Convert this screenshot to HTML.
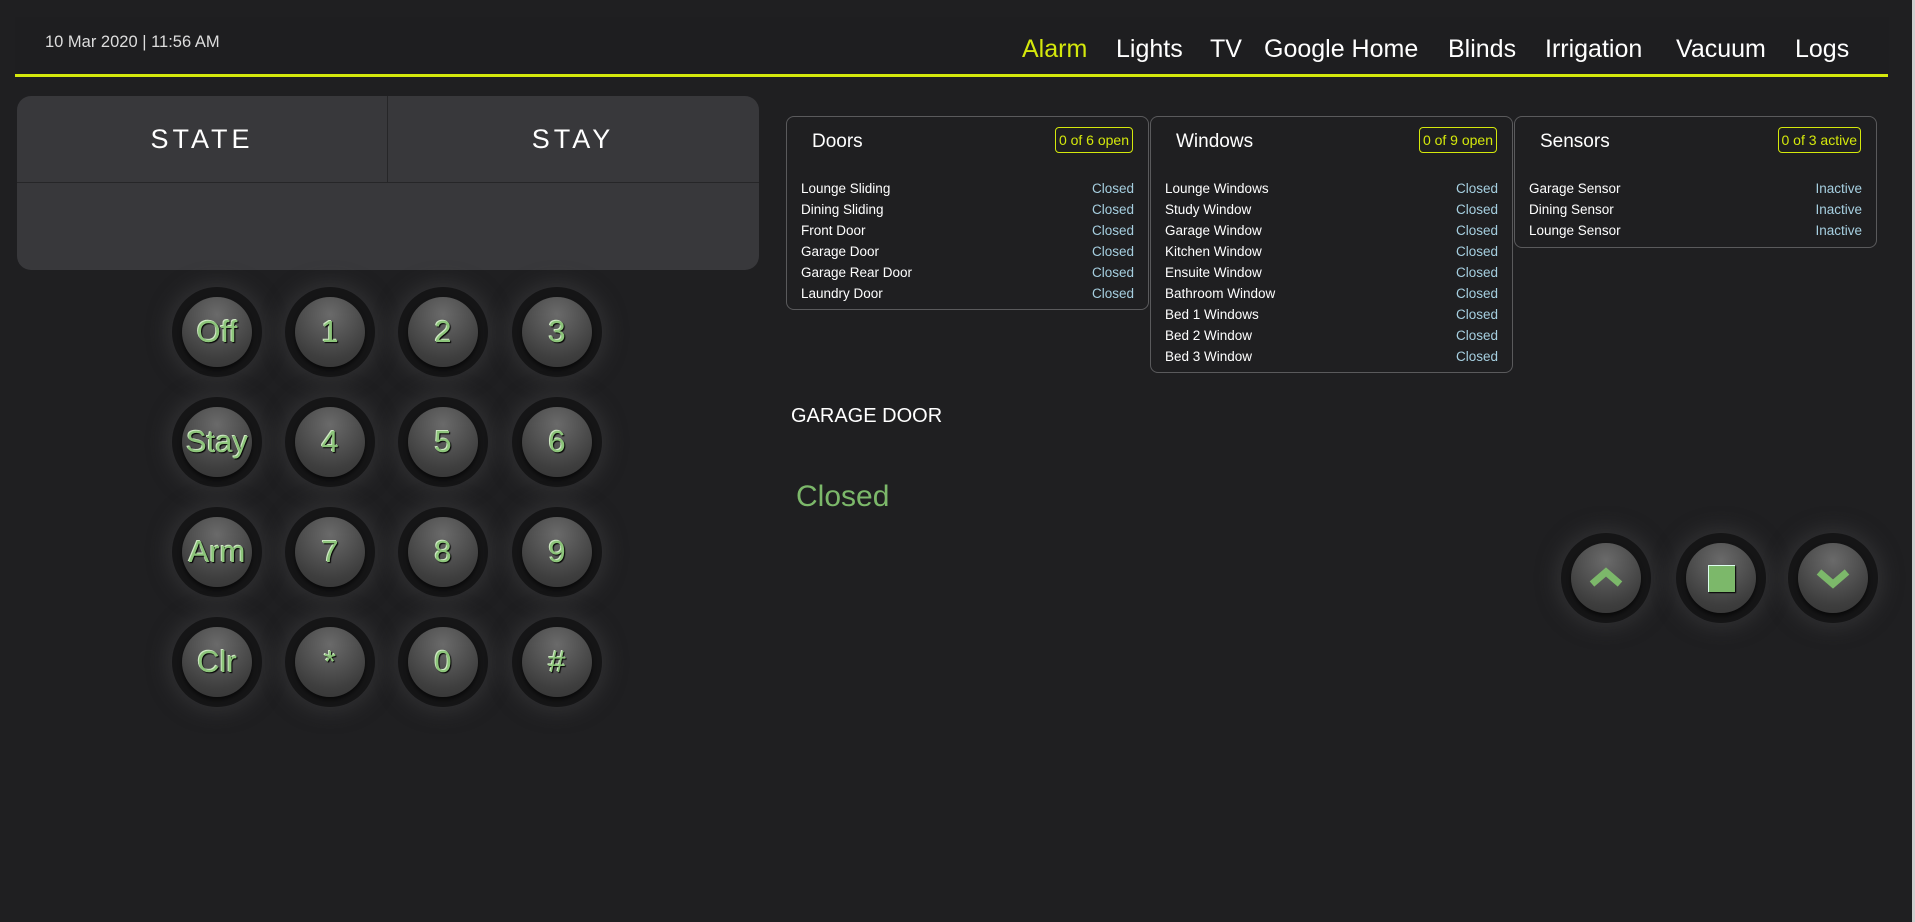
<!DOCTYPE html>
<html><head><meta charset="utf-8"><style>
*{margin:0;padding:0;box-sizing:border-box}
body{width:1915px;height:922px;background:#1f1f21;position:relative;overflow:hidden;font-family:"Liberation Sans",sans-serif;color:#fff}
.a{position:absolute;white-space:nowrap}
.nav{top:35px;font-size:25px;color:#fff}
.hdr{left:15px;top:17px;width:1874px;height:60px;background:#1e1e20}
.line{left:15px;top:74px;width:1873px;height:3px;background:#d4e80c}
.panel{left:17px;top:96px;width:742px;height:174px;background:#38383b;border-radius:14px}
.btn{width:90px;height:90px;border-radius:50%;background:#151516;box-shadow:0 0 18px 6px rgba(60,60,62,.55);}
.btn .in{position:absolute;left:10px;top:10px;width:70px;height:70px;border-radius:50%;background:radial-gradient(circle at 50% 25%,#6a6a6a,#3e3e3e 70%,#333 100%);box-shadow:0 3px 4px rgba(0,0,0,.6);display:flex;align-items:center;justify-content:center;color:#8cc47a;font-size:31px;text-shadow:1px 1px 1px #000,-1px -1px 0 #cfe8c4}
.card{border:1px solid #5a5a5c;border-radius:8px;background:#1f1f21}
.card .t{position:absolute;left:25px;top:14px;font-size:19px}
.card .b{position:absolute;top:10px;right:15px;border:1px solid #d4e80c;color:#d4e80c;border-radius:4px;font-size:14px;padding:4px 3px}
.row{position:absolute;left:14px;right:14px;font-size:13.5px;display:flex;justify-content:space-between}
.row span:last-child{color:#a6cfe0}
.sb{left:1912px;top:0;width:3px;height:922px;background:#cfcfcf}
</style></head><body>
<div class="a hdr"></div>
<div class="a" style="left:45px;top:33px;font-size:16.5px;color:#ddd">10 Mar 2020 | 11:56 AM</div>
<div class="a nav" style="left:1022px;color:#d4e80c">Alarm</div>
<div class="a nav" style="left:1116px">Lights</div>
<div class="a nav" style="left:1210px">TV</div>
<div class="a nav" style="left:1264px">Google Home</div>
<div class="a nav" style="left:1448px">Blinds</div>
<div class="a nav" style="left:1545px">Irrigation</div>
<div class="a nav" style="left:1676px">Vacuum</div>
<div class="a nav" style="left:1795px">Logs</div>
<div class="a line"></div>

<div class="a panel">
 <div class="a" style="left:0;top:86px;width:742px;height:1px;background:#262628"></div>
 <div class="a" style="left:370px;top:0;width:1px;height:86px;background:#262628"></div>
 <div class="a" style="left:0;top:28px;width:370px;text-align:center;font-size:27px;letter-spacing:4px">STATE</div>
 <div class="a" style="left:370px;top:28px;width:372px;text-align:center;font-size:27px;letter-spacing:4px">STAY</div>
</div>

<div class="a btn" style="left:172px;top:287px"><div class="in">Off</div></div>
<div class="a btn" style="left:285px;top:287px"><div class="in">1</div></div>
<div class="a btn" style="left:398px;top:287px"><div class="in">2</div></div>
<div class="a btn" style="left:512px;top:287px"><div class="in">3</div></div>
<div class="a btn" style="left:172px;top:397px"><div class="in">Stay</div></div>
<div class="a btn" style="left:285px;top:397px"><div class="in">4</div></div>
<div class="a btn" style="left:398px;top:397px"><div class="in">5</div></div>
<div class="a btn" style="left:512px;top:397px"><div class="in">6</div></div>
<div class="a btn" style="left:172px;top:507px"><div class="in">Arm</div></div>
<div class="a btn" style="left:285px;top:507px"><div class="in">7</div></div>
<div class="a btn" style="left:398px;top:507px"><div class="in">8</div></div>
<div class="a btn" style="left:512px;top:507px"><div class="in">9</div></div>
<div class="a btn" style="left:172px;top:617px"><div class="in">Clr</div></div>
<div class="a btn" style="left:285px;top:617px"><div class="in">*</div></div>
<div class="a btn" style="left:398px;top:617px"><div class="in">0</div></div>
<div class="a btn" style="left:512px;top:617px"><div class="in">#</div></div>

<div class="a card" style="left:786px;top:116px;width:363px;height:194px">
 <div class="t">Doors</div><div class="b">0 of 6 open</div>
 <div class="row" style="top:64px"><span>Lounge Sliding</span><span>Closed</span></div>
 <div class="row" style="top:85px"><span>Dining Sliding</span><span>Closed</span></div>
 <div class="row" style="top:106px"><span>Front Door</span><span>Closed</span></div>
 <div class="row" style="top:127px"><span>Garage Door</span><span>Closed</span></div>
 <div class="row" style="top:148px"><span>Garage Rear Door</span><span>Closed</span></div>
 <div class="row" style="top:169px"><span>Laundry Door</span><span>Closed</span></div>
</div>
<div class="a card" style="left:1150px;top:116px;width:363px;height:257px">
 <div class="t">Windows</div><div class="b">0 of 9 open</div>
 <div class="row" style="top:64px"><span>Lounge Windows</span><span>Closed</span></div>
 <div class="row" style="top:85px"><span>Study Window</span><span>Closed</span></div>
 <div class="row" style="top:106px"><span>Garage Window</span><span>Closed</span></div>
 <div class="row" style="top:127px"><span>Kitchen Window</span><span>Closed</span></div>
 <div class="row" style="top:148px"><span>Ensuite Window</span><span>Closed</span></div>
 <div class="row" style="top:169px"><span>Bathroom Window</span><span>Closed</span></div>
 <div class="row" style="top:190px"><span>Bed 1 Windows</span><span>Closed</span></div>
 <div class="row" style="top:211px"><span>Bed 2 Window</span><span>Closed</span></div>
 <div class="row" style="top:232px"><span>Bed 3 Window</span><span>Closed</span></div>
</div>
<div class="a card" style="left:1514px;top:116px;width:363px;height:132px">
 <div class="t">Sensors</div><div class="b">0 of 3 active</div>
 <div class="row" style="top:64px"><span>Garage Sensor</span><span>Inactive</span></div>
 <div class="row" style="top:85px"><span>Dining Sensor</span><span>Inactive</span></div>
 <div class="row" style="top:106px"><span>Lounge Sensor</span><span>Inactive</span></div>
</div>

<div class="a" style="left:791px;top:405px;font-size:20px">GARAGE DOOR</div>
<div class="a" style="left:796px;top:480px;font-size:30px;color:#7cb86a">Closed</div>

<div class="a btn" style="left:1561px;top:533px"><div class="in"><svg width="34" height="24" viewBox="0 0 34 24"><path d="M3 18 L17 6 L31 18" fill="none" stroke="#7cb86a" stroke-width="7"/></svg></div></div>
<div class="a btn" style="left:1676px;top:533px"><div class="in"><div style="width:27px;height:27px;background:#7cb86a;border-top:1px solid #dfe;border-left:1px solid #dfe;box-shadow:1px 1px 1px #000"></div></div></div>
<div class="a btn" style="left:1788px;top:533px"><div class="in"><svg width="34" height="24" viewBox="0 0 34 24"><path d="M3 6 L17 18 L31 6" fill="none" stroke="#7cb86a" stroke-width="7"/></svg></div></div>

<div class="a sb"></div>
</body></html>
